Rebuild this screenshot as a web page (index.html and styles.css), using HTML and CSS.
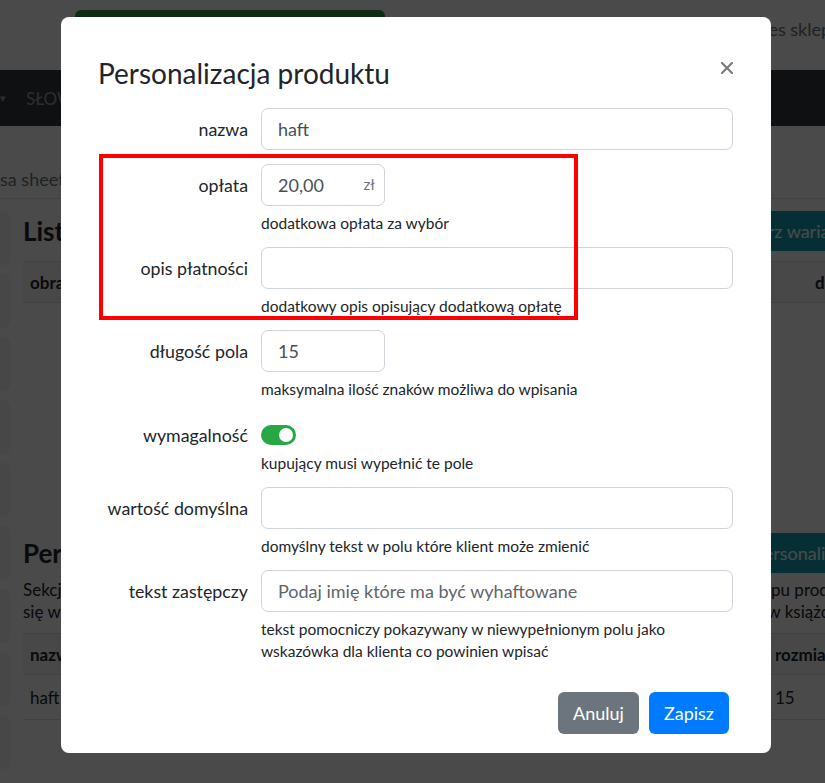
FILE: index.html
```html
<!DOCTYPE html>
<html lang="pl">
<head>
    <meta charset="utf-8">
    <title>Personalizacja produktu</title>
    <link rel="stylesheet" href="styles.css">
</head>

<body>
<div class="page">
    <div class="topbar">
        <div class="btn-green">Zapisz produkt</div>
        <span class="shop-link">Twój adres sklepu</span>
    </div>

    <nav class="navbar">
        <span class="caret">&#9662;</span>
        <span class="nav-item">SŁOWNIKI</span>
    </nav>

    <div class="crumb">sa sheet</div>

    <div class="layout">
        <div class="sidebar">
            <div class="side-card"></div>
            <div class="side-card"></div>
            <div class="side-card"></div>
            <div class="side-card"></div>
            <div class="side-card"></div>
            <div class="side-card"></div>
            <div class="side-card"></div>
            <div class="side-card"></div>
            <div class="side-card"></div>
        </div>

        <div class="main">
            <div class="section-head">
                <h2>Lista wariantów</h2>
                <span class="btn-teal variant">Utwórz wariant</span>
            </div>
            <div class="table-head variants">
                <span>obraz</span>
                <span>dostępność</span>
            </div>

            <div class="section-head second">
                <h2>Personalizacja</h2>
                <span class="btn-teal pers">Dodaj personalizację</span>
            </div>
            <p class="section-text">Sekcja personalizacji pozwala dodać nowe pola tekstowe wypełniane przez kupującego podczas zakupu produktu<br>się w szczegółach zamówienia, a wszystkie wpisane przez klienta wartości są zapisywane i widoczne w książce zamówień</p>
            <div class="table-head pers">
                <span>nazwa</span>
                <span>rozmiar</span>
            </div>
            <div class="table-row pers">
                <span>haft</span>
                <span>15</span>
            </div>
        </div>
    </div>
</div>

<div class="backdrop"></div>

<div class="modal">
    <div class="modal-content">
        <div class="modal-header">
            <h3 class="modal-title">Personalizacja produktu</h3>
            <button class="close" aria-label="Zamknij">
                <svg width="12" height="12" viewBox="0 0 12 12">
                    <path d="M1 1 L11 11 M11 1 L1 11" stroke="#7b7b7b" stroke-width="2.2" stroke-linecap="round"/>
                </svg>
            </button>
        </div>

        <div class="modal-body">
            <div class="form-group first">
                <label class="form-label">nazwa</label>
                <input class="form-control" type="text" value="haft">
            </div>

            <div class="form-group">
                <label class="form-label">opłata</label>
                <div class="price-input">
                    <input class="form-control short" type="text" value="20,00">
                    <span class="currency">zł</span>
                </div>
                <small class="help">dodatkowa opłata za wybór</small>
            </div>

            <div class="form-group">
                <label class="form-label">opis płatności</label>
                <input class="form-control" type="text" value="">
                <small class="help">dodatkowy opis opisujący dodatkową opłatę</small>
            </div>

            <div class="form-group">
                <label class="form-label">długość pola</label>
                <input class="form-control short" type="text" value="15">
                <small class="help">maksymalna ilość znaków możliwa do wpisania</small>
            </div>

            <div class="form-group switch-row">
                <label class="form-label">wymagalność</label>
                <span class="switch"><span class="knob"></span></span>
                <small class="help">kupujący musi wypełnić te pole</small>
            </div>

            <div class="form-group">
                <label class="form-label">wartość domyślna</label>
                <input class="form-control" type="text" value="">
                <small class="help">domyślny tekst w polu które klient może zmienić</small>
            </div>

            <div class="form-group">
                <label class="form-label">tekst zastępczy</label>
                <input class="form-control" type="text" placeholder="Podaj imię które ma być wyhaftowane">
                <small class="help">tekst pomocniczy pokazywany w niewypełnionym polu jako<br>wskazówka dla klienta co powinien wpisać</small>
            </div>
        </div>

        <div class="modal-footer">
            <button class="btn btn-secondary">Anuluj</button>
            <button class="btn btn-primary">Zapisz</button>
        </div>

        <!-- red annotation frame -->
        <div class="highlight"></div>
    </div>
</div>
</body>
</html>
```

FILE: styles.css
```css
body {
    margin: 0;
    font-family: Lato, "Open Sans", sans-serif;
    color: #212529;
    background-color: #fff;
    height: 783px;
    overflow: hidden;
}

/* page behind the modal */

.page {
    width: 1000px;
}

.topbar {
    height: 70px;
    display: flex;
    align-items: flex-start;
    padding-top: 10px;
    box-sizing: border-box;
}

.btn-green {
    margin-left: 75px;
    width: 310px;
    height: 40px;
    background-color: #2a9d45;
    border-radius: 6px;
    color: #fff;
    font-size: 17px;
    line-height: 40px;
    text-align: center;
}

.shop-link {
    margin-left: 316px;
    margin-top: 8px;
    font-size: 18px;
    color: #6c757d;
    white-space: nowrap;
}

.navbar {
    height: 56px;
    background-color: #343a40;
    color: rgba(255, 255, 255, 0.5);
    display: flex;
    align-items: center;
    font-size: 17px;
}

.caret {
    font-size: 11px;
    margin-right: 20px;
}

.crumb {
    height: 73px;
    box-sizing: border-box;
    border-bottom: 1px solid #dee2e6;
    padding-top: 42px;
    font-size: 18px;
    color: #6c757d;
}

.layout {
    display: flex;
    gap: 13px;
    padding-top: 12px;
}

.sidebar {
    width: 10px;
    flex-shrink: 0;
}

.side-card {
    height: 54px;
    margin-bottom: 9px;
    background-color: #f3f3f3;
    border-radius: 0 6px 6px 0;
}

.main {
    flex: 1;
}

.section-head {
    display: flex;
    justify-content: space-between;
    align-items: center;
    height: 40px;
}

.section-head h2 {
    margin: 0;
    font-size: 26px;
    font-weight: 700;
}

.section-head.second {
    margin-top: 230px;
}

.btn-teal {
    width: 300px;
    height: 40px;
    line-height: 40px;
    background-color: #17a2b8;
    color: #fff;
    border-radius: 6px;
    font-size: 18px;
    box-sizing: border-box;
    white-space: nowrap;
    overflow: hidden;
}

.btn-teal.variant {
    padding-left: 24px;
}

.btn-teal.pers {
    padding-left: 2px;
}

.table-head,
.table-row {
    display: grid;
    height: 40px;
    align-items: center;
    font-size: 17px;
    padding-left: 7px;
}

.table-head {
    font-weight: 700;
    background-color: #f8f9fa;
    border-top: 1px solid #dee2e6;
    border-bottom: 1px solid #dee2e6;
}

.table-head.variants {
    margin-top: 10px;
    grid-template-columns: 785px 1fr;
}

.table-head.pers,
.table-row.pers {
    grid-template-columns: 745px 1fr;
}

.table-row {
    height: 44px;
    border-bottom: 1px solid #dee2e6;
}

.section-text {
    margin: 6px 0 10px;
    font-size: 17px;
    line-height: 22px;
    white-space: nowrap;
}

.backdrop {
    position: fixed;
    inset: 0;
    background: rgba(0, 0, 0, 0.71);
}

/* modal */

.modal {
    position: fixed;
    inset: 0;
}

.modal-content {
    position: relative;
    width: 710px;
    margin: 17px 0 0 61px;
    background-color: #fff;
    border-radius: 8px;
}

.modal-header {
    display: flex;
    justify-content: space-between;
    align-items: flex-start;
    padding: 40px 38px 0 37px;
}

.modal-title {
    margin: 0;
    font-size: 28px;
    font-weight: 400;
    line-height: 32px;
}

.close {
    border: none;
    background: none;
    padding: 0;
    margin-top: 5px;
    cursor: pointer;
}

.modal-body {
    padding: 19px 38px 0 37px;
}

.form-group {
    display: grid;
    grid-template-columns: 150px 1fr;
    column-gap: 13px;
    margin-bottom: 13px;
}

.form-group.first {
    margin-bottom: 14px;
}

.form-label {
    grid-column: 1;
    text-align: right;
    font-size: 17.8px;
    line-height: 42px;
}

.form-control {
    grid-column: 2;
    height: 42px;
    box-sizing: border-box;
    border: 1px solid #ced4da;
    border-radius: 7px;
    padding: 0 16px;
    font-family: inherit;
    font-size: 18px;
    color: #495057;
    width: 100%;
}

.form-control::placeholder {
    color: #5f656b;
}

.form-control.short {
    width: 124px;
}

.price-input {
    grid-column: 2;
    position: relative;
    width: 124px;
}

.currency {
    position: absolute;
    right: 10px;
    top: 11px;
    font-size: 15px;
    color: #6c757d;
}

.help {
    grid-column: 2;
    margin-top: 6px;
    font-size: 15.5px;
    line-height: 22px;
}

.switch-row .form-label {
    line-height: 20px;
    margin-top: 12px;
}

.switch {
    grid-column: 2;
    margin-top: 12px;
    width: 35px;
    height: 20px;
    border-radius: 10px;
    background-color: #28a745;
    position: relative;
}

.knob {
    position: absolute;
    right: 3px;
    top: 3px;
    width: 14px;
    height: 14px;
    border-radius: 50%;
    background-color: #fff;
}

.switch-row .help {
    margin-top: 7px;
}

.modal-footer {
    display: flex;
    justify-content: flex-end;
    gap: 10px;
    padding: 17px 42px 19px;
}

.btn {
    height: 42px;
    border: none;
    border-radius: 6px;
    color: #fff;
    font-family: inherit;
    font-size: 18px;
    padding: 0 15px;
    cursor: pointer;
}

.btn-secondary {
    background-color: #6c757d;
}

.btn-primary {
    background-color: #007bff;
}

.highlight {
    position: absolute;
    left: 38px;
    top: 137px;
    width: 479px;
    height: 166px;
    border: 4px solid #ff0000;
    box-sizing: border-box;
}
```
